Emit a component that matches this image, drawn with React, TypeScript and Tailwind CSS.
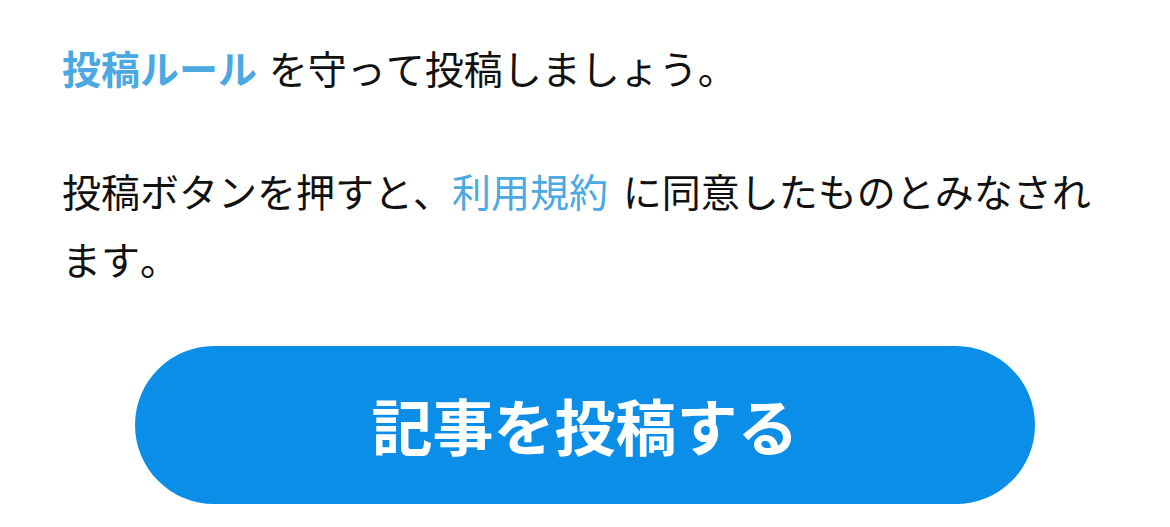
export default function App() {
  return (
    <div
      className="min-h-screen bg-white px-[62px] pt-[33px] text-[#111111] [font-kerning:none]"
      style={{ fontFamily: '"Noto Sans CJK JP", "Noto Sans", sans-serif' }}
    >
      <p className="text-[39px] leading-[68px]">
        <a href="#" className="mr-[3px] font-bold text-[#4aa8e2]">
          投稿ルール
        </a>{" "}
        を守って投稿しましょう。
      </p>

      <p className="mt-[55px] text-[39px] leading-[68px]">
        投稿ボタンを押すと、
        <a href="#" className="mr-[6px] text-[#4aa8e2]">
          利用規約
        </a>{" "}
        に同意したものとみなされます。
      </p>

      <div className="mt-[54px] flex justify-center">
        <button className="flex h-[158px] w-[900px] items-center justify-center rounded-full bg-[#0b8ee8] text-[61px] font-bold text-white">
          記事を投稿する
        </button>
      </div>
    </div>
  );
}
